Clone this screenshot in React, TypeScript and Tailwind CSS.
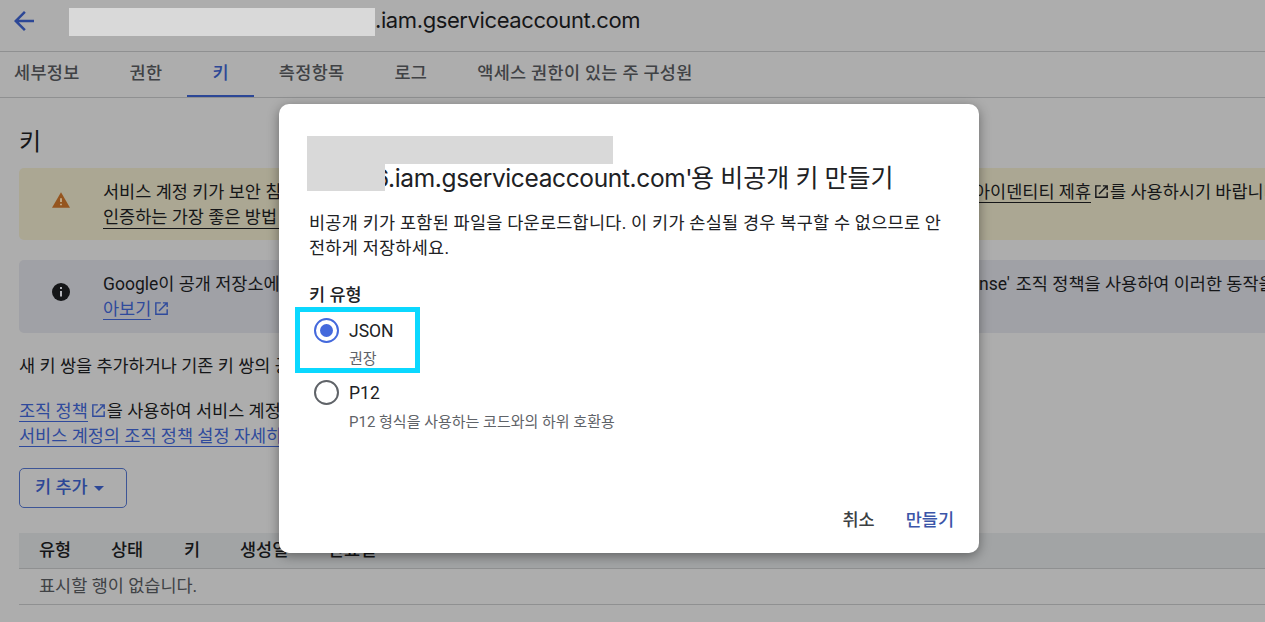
import { useState } from "react";

interface ITab {
    label: string
    active?: boolean
}

interface IKeyType {
    id: string
    label: string
    hint: string
}

const tabs: ITab[] = [
    { label: "세부정보" },
    { label: "권한" },
    { label: "키", active: true },
    { label: "측정항목" },
    { label: "로그" },
    { label: "액세스 권한이 있는 주 구성원" },
]

const keyTypes: IKeyType[] = [
    { id: "json", label: "JSON", hint: "권장" },
    { id: "p12", label: "P12", hint: "P12 형식을 사용하는 코드와의 하위 호환용" },
]

const ExternalIcon = ({ className }: { className: string }) => (
    <svg viewBox="0 0 24 24" className={`inline-block h-[17px] w-[17px] shrink-0 fill-current ${className}`}>
        <path d="M19 19H5V5h6V3H3v18h18v-8h-2v6zM14 3v2h3.59l-9.83 9.83 1.41 1.41L19 6.41V10h2V3h-7z" />
    </svg>
)

const Header = () => (
    <header className="flex h-[52px] items-start border-b border-[#8f9091]">
        <svg viewBox="0 0 24 24" className="mt-[6px] ml-[9px] h-[30px] w-[30px] fill-[#2c4796]">
            <path d="M20 11H7.83l5.59-5.59L12 4l-8 8 8 8 1.41-1.41L7.83 13H20v-2z" />
        </svg>
        <div className="mt-2 ml-[30px] h-7 w-[306px] bg-[#d9d9d9]" />
        <h1 className="mt-[5px] font-[Inter,sans-serif] text-[22px] leading-[30px] tracking-[-0.4px] text-[#151618]">.iam.gserviceaccount.com</h1>
    </header>
)

const TabBar = () => (
    <nav className="flex h-[46px] border-b border-[#8f9091] text-[17.5px] font-medium tracking-[0.3px] text-[#404245]">
        {tabs.map((tab, i) => (
            <div
                key={tab.label}
                className={`flex h-[45px] items-center whitespace-nowrap pr-[25px] ${i === 0 ? "pl-[14px]" : "pl-[25px]"} ${tab.active ? "border-b-2 border-[#2c4796] text-[#2c4796]" : "pb-[2px]"}`}
            >
                {tab.label}
            </div>
        ))}
    </nav>
)

const Notices = () => (
    <div className="flex flex-col gap-5">
        <div className="flex h-[72px] rounded-l-[5px] bg-[#aba793]">
            <div className="flex w-[84px] shrink-0 items-center justify-center pb-[8px]">
                <svg viewBox="0 0 22 19" className="h-[16px] w-[18px]">
                    <path d="M0 19h22L11 0 0 19z" fill="#95551f" />
                    <path d="M10 7.5h2V12h-2zM10 14h2v2h-2z" fill="#c9b899" />
                </svg>
            </div>
            <div className="w-[871px] shrink-0 overflow-hidden pt-[12px] whitespace-nowrap">
                <p>서비스 계정 키가 보안 침해</p>
                <p className="flex"><span className="h-[24px] border-b border-[#151618]">인증하는 가장 좋은 방법 알아</span></p>
            </div>
            <p className="flex pt-[12px] whitespace-nowrap">
                <span className="h-[23px] border-b border-[#151618]">아이덴티티 제휴</span>
                <ExternalIcon className="mt-[3px] ml-[2px]" />
                를 사용하시기 바랍니다
            </p>
        </div>
        <div className="flex h-[73px] rounded-l-[5px] bg-[#a0a1a6]">
            <div className="flex w-[84px] shrink-0 items-center justify-center pb-[9px]">
                <svg viewBox="0 0 18 18" className="h-[18px] w-[18px]">
                    <circle cx="9" cy="9" r="9" fill="#151618" />
                    <path d="M8 4h2v2H8zM8 8h2v5.5H8z" fill="#b4b5ba" />
                </svg>
            </div>
            <div className="w-[876px] shrink-0 overflow-hidden pt-[12px] whitespace-nowrap">
                <p>Google이 공개 저장소에서</p>
                <p className="flex text-[#2f4a9c]">
                    <span className="h-[23px] border-b border-[#2f4a9c]">아보기</span>
                    <ExternalIcon className="mt-[3px] ml-[2px]" />
                </p>
            </div>
            <p className="pt-[12px] whitespace-nowrap"><span className="mr-[1.5px]">nse'</span> 조직 정책을 사용하여 이러한 동작을</p>
        </div>
    </div>
)

const KeyTable = () => (
    <div className="mt-[25px] text-[17.5px]">
        <div className="flex h-9 items-center border-b border-[#8f9091] bg-[#a2a4a5] pl-5 font-medium">
            <span className="w-[72px]">유형</span>
            <span className="w-[73px]">상태</span>
            <span className="w-[56px]">키</span>
            <span className="w-[88px]">생성일</span>
            <span>만료일</span>
        </div>
        <div className="flex h-9 items-center border-b border-[#8f9091] pl-5 text-[#404245]">표시할 행이 없습니다.</div>
    </div>
)

const Radio = ({ checked }: { checked: boolean }) => (
    <span className={`flex h-[25px] w-[25px] shrink-0 items-center justify-center rounded-full border-2 ${checked ? "border-[#4469dc]" : "border-[#5f6368]"}`}>
        {checked && <span className="h-[13px] w-[13px] rounded-full bg-[#4469dc]" />}
    </span>
)

const CreateKeyDialog = () => {
    const [selected, setSelected] = useState("json")

    return (
        <div role="dialog" className="absolute top-[104px] left-[279px] flex h-[449px] w-[700px] flex-col rounded-[10px] bg-white pt-8 text-[#202124] shadow-[0_3px_12px_rgba(0,0,0,0.4)]">
            <div className="ml-7 h-7 w-[306px] bg-[#d9d9d9]" />
            <div className="ml-7 flex h-[27px] items-center">
                <div className="z-10 h-[27px] w-[78px] shrink-0 bg-[#d9d9d9]" />
                <h2 className="mt-[2px] -ml-[11px] flex font-[Inter,'Noto_Sans_CJK_KR',sans-serif] text-[25px] leading-[27px] whitespace-nowrap">
                    <span className="w-[317px] text-[24.5px] tracking-[-0.36px]">6.iam.gserviceaccount.com'</span>
                    <span className="font-[Roboto,'Noto_Sans_CJK_KR',sans-serif]">용 비공개 키 만들기</span>
                </h2>
            </div>

            <p className="mt-[20px] pl-[30px] leading-[25px] tracking-[0.25px] whitespace-nowrap">
                비공개 키가 포함된 파일을 다운로드합니다. 이 키가 손실될 경우 복구할 수 없으므로 안<br />전하게 저장하세요.
            </p>
            <p className="mt-[22px] pl-[30px] leading-[25px] font-medium">키 유형</p>

            <div className="-mt-[1px] ml-4 flex flex-col">
                {keyTypes.map((type) => (
                    <label
                        key={type.id}
                        onClick={() => setSelected(type.id)}
                        className={`flex h-[66px] items-start gap-[10px] border-[5px] pl-[14px] whitespace-nowrap ${type.id === "json" ? "w-[125px] border-[#0bd8ff] pt-[6px]" : "-mt-[1px] w-[400px] border-transparent pt-[3px]"}`}
                    >
                        <Radio checked={selected === type.id} />
                        <span className="flex flex-col pt-[1px]">
                            <span className="leading-[25px]">{type.label}</span>
                            <span className={`text-[15px] leading-[24px] text-[#5f6368] ${type.id === "json" ? "mt-[3px]" : "mt-[4px]"}`}>{type.hint}</span>
                        </span>
                    </label>
                ))}
            </div>

            <div className="mt-auto mr-[25px] mb-[20px] flex justify-end gap-[31px] leading-[25px] font-medium">
                <button className="text-[#3c4043]">취소</button>
                <button className="text-[#3b55a8]">만들기</button>
            </div>
        </div>
    )
}

const App = () => {
    return (
        <div className="relative h-[622px] w-[1265px] overflow-hidden bg-[#adadad] font-[Roboto,'Noto_Sans_CJK_KR',sans-serif] text-[17.5px] leading-[25px] text-[#151618]">
            <Header />
            <TabBar />
            <main className="pl-[19px]">
                <h2 className="flex h-[70px] items-center pt-[18px] text-[24px]">키</h2>
                <Notices />
                <p className="mt-[21px] whitespace-nowrap">새 키 쌍을 추가하거나 기존 키 쌍의 공</p>
                <div className="mt-[20px] whitespace-nowrap">
                    <p className="flex">
                        <span className="h-[23px] border-b border-[#2f4a9c] text-[#2f4a9c]">조직 정책</span>
                        <ExternalIcon className="mt-[3px] ml-[2px] text-[#2f4a9c]" />
                        을 사용하여 서비스 계정
                    </p>
                    <p className="flex text-[#2f4a9c]">
                        <span className="h-[23px] border-b border-[#2f4a9c]">서비스 계정의 조직 정책 설정 자세히</span>
                    </p>
                </div>
                <button className="mt-[21px] flex h-10 w-[108px] items-center gap-[6px] rounded-[5px] border border-[#3d5596] pb-[2px] pl-[15px] font-medium text-[#2c4796]">
                    키 추가
                    <svg viewBox="0 0 10 5" className="mt-[2px] h-[5px] w-[10px] fill-current">
                        <path d="M0 0h10L5 5z" />
                    </svg>
                </button>
                <KeyTable />
            </main>
            <CreateKeyDialog />
        </div>
    );
}

export default App;
